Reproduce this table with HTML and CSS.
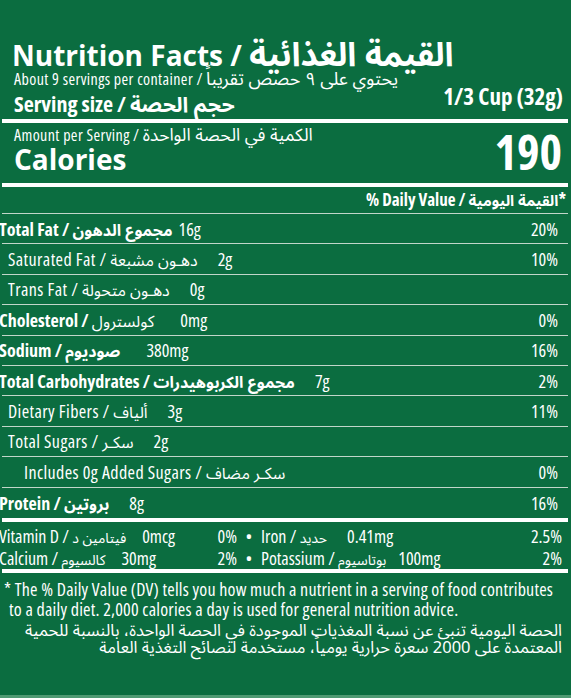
FILE: index.html
```html
<!DOCTYPE html>
<html lang="en">
<head>
  <meta charset="UTF-8">
  <title>Nutrition Facts</title>
  <link rel="stylesheet" href="styles.css">
</head>
<body>

  <div class="label">
    <h1 class="title">Nutrition Facts / <span class="ar">القيمة الغذائية</span></h1>
    <div class="servings">About 9 servings per container / <span class="ar">يحتوي على ٩ حصص تقريباً</span></div>
    <div class="serving-size">
      <span>Serving size / <span class="ar">حجم الحصة</span></span>
      <span class="cup">1/3 Cup (32g)</span>
    </div>

    <div class="rule-thick"></div>

    <div class="calories-block">
      <div>
        <div class="amount">Amount per Serving / <span class="ar">الكمية في الحصة الواحدة</span></div>
        <div class="calories">Calories</div>
      </div>
      <div class="cal-num">190</div>
    </div>

    <div class="rule-thick"></div>

    <div class="dv-head">% Daily Value / <span class="ar">القيمة اليومية</span>*</div>

    <div class="rows">
      <div class="row main close">
        <span class="name">Total Fat / <span class="ar">مجموع الدهون</span></span>
        <span class="amt">16g</span>
        <span class="pct">20%</span>
      </div>
      <div class="row sub">
        <span class="name">Saturated Fat / <span class="ar">دهـون مشبعة</span></span>
        <span class="amt">2g</span>
        <span class="pct">10%</span>
      </div>
      <div class="row sub">
        <span class="name">Trans Fat / <span class="ar">دهـون متحولة</span></span>
        <span class="amt">0g</span>
        <span class="pct"></span>
      </div>
      <div class="row main wide">
        <span class="name">Cholesterol / <span class="ar light">كولسترول</span></span>
        <span class="amt">0mg</span>
        <span class="pct">0%</span>
      </div>
      <div class="row main wide">
        <span class="name">Sodium / <span class="ar">صوديوم</span></span>
        <span class="amt">380mg</span>
        <span class="pct">16%</span>
      </div>
      <div class="row main">
        <span class="name">Total Carbohydrates / <span class="ar">مجموع الكربوهيدرات</span></span>
        <span class="amt">7g</span>
        <span class="pct">2%</span>
      </div>
      <div class="row sub">
        <span class="name">Dietary Fibers / <span class="ar">ألياف</span></span>
        <span class="amt">3g</span>
        <span class="pct">11%</span>
      </div>
      <div class="row sub">
        <span class="name">Total Sugars / <span class="ar">سكـر</span></span>
        <span class="amt">2g</span>
        <span class="pct"></span>
      </div>
      <div class="row sub2">
        <span class="name">Includes 0g Added Sugars / <span class="ar">سكـر مضاف</span></span>
        <span class="pct">0%</span>
      </div>
      <div class="row main last">
        <span class="name">Protein / <span class="ar">بروتين</span></span>
        <span class="amt">8g</span>
        <span class="pct">16%</span>
      </div>
    </div>

    <div class="rule-thick"></div>

    <div class="minerals">
      <div class="mineral-row">
        <div class="half">
          <span>Vitamin D / <span class="ar">فيتامين د</span></span>
          <span>0mcg</span>
          <span class="m-pct">0%</span>
        </div>
        <span class="dot">•</span>
        <div class="half right">
          <span>Iron / <span class="ar">حديد</span></span>
          <span>0.41mg</span>
          <span class="m-pct">2.5%</span>
        </div>
      </div>
      <div class="mineral-row">
        <div class="half">
          <span>Calcium / <span class="ar">كالسيوم</span></span>
          <span>30mg</span>
          <span class="m-pct">2%</span>
        </div>
        <span class="dot">•</span>
        <div class="half right near">
          <span>Potassium / <span class="ar">بوتاسيوم</span></span>
          <span>100mg</span>
          <span class="m-pct">2%</span>
        </div>
      </div>
    </div>

    <div class="rule-thick"></div>

    <div class="footnote">
      <p class="en">* The % Daily Value (DV) tells you how much a nutrient in a serving of food contributes</p>
      <p class="en indent">to a daily diet. 2,000 calories a day is used for general nutrition advice.</p>
      <p class="ar-note" dir="rtl">الحصة اليومية تنبئ عن نسبة المغذيات الموجودة في الحصة الواحدة، بالنسبة للحمية<br>المعتمدة على 2000 سعرة حرارية يومياً، مستخدمة لنصائح التغذية العامة</p>
    </div>
  </div>

</body>
</html>
```

FILE: styles.css
```css
* {
  box-sizing: border-box;
  margin: 0;
  padding: 0;
}

body {
  width: 571px;
  height: 698px;
  overflow: hidden;
  background: #0b6d40;
  color: #fff;
  font-family: "Open Sans", sans-serif;
  font-stretch: 75%;
  border-bottom: 3px solid #4f9a73;
}

/* arabic runs inside english lines: keep them from growing the line box */
.ar {
  font-family: "Noto Sans Arabic", "DejaVu Sans", sans-serif;
  font-stretch: normal;
  letter-spacing: 0;
  line-height: 0;
}

.label {
  padding: 40px 3px 0 2px;
}

/* header */
.title {
  font-size: 28px;
  font-stretch: normal;
  font-weight: bold;
  line-height: 30px;
  padding-left: 10px;
  white-space: nowrap;
}

.title .ar {
  font-size: 33px;
}

.servings {
  font-size: 16px;
  letter-spacing: 0.4px;
  line-height: 18px;
  padding-left: 12px;
  white-space: nowrap;
}

.servings .ar {
  font-size: 18px;
}

.serving-size {
  display: flex;
  justify-content: space-between;
  align-items: flex-start;
  margin: 4px 0 5px;
  padding: 0 5px 0 12px;
  font-size: 22px;
  font-weight: bold;
  line-height: 22px;
}

.serving-size .ar {
  font-size: 21px;
}

.cup {
  font-size: 23px;
  line-height: 8px;
}

.rule-thick {
  height: 4px;
  background: #fff;
}

/* calories */
.calories-block {
  display: flex;
  justify-content: space-between;
  align-items: flex-end;
  padding: 3px 6px 9px 12px;
}

.amount {
  font-size: 16px;
  letter-spacing: 0.4px;
  line-height: 18px;
  white-space: nowrap;
}

.amount .ar {
  font-size: 17.5px;
}

.calories {
  font-size: 28px;
  font-stretch: normal;
  font-weight: bold;
  line-height: 30px;
}

.cal-num {
  font-size: 48px;
  font-weight: bold;
  line-height: 44px;
}

/* nutrients */
.dv-head {
  text-align: right;
  font-size: 17px;
  font-weight: bold;
  line-height: 26px;
  padding-right: 2px;
  border-bottom: 1px solid #c2d6ca;
}

.dv-head .ar {
  font-size: 15px;
}

.row {
  display: flex;
  align-items: center;
  gap: 20px;
  height: 30.4px;
  font-size: 18px;
  line-height: 22px;
  border-bottom: 1px solid #c2d6ca;
  white-space: nowrap;
}

.row.close {
  gap: 6px;
}

.row.wide {
  gap: 26px;
}

.row.last {
  border-bottom: none;
}

.row .ar {
  font-size: 16px;
}

.row.sub .name,
.row.sub2 .name {
  letter-spacing: 0.4px;
}

.row.main .name {
  font-weight: bold;
  margin-left: -3px;
}

.row.main .ar.light {
  font-weight: normal;
}

.row.sub {
  padding-left: 6px;
}

.row.sub2 {
  padding-left: 22px;
}

.pct {
  margin-left: auto;
  padding-right: 10px;
}

/* vitamins and minerals */
.minerals {
  padding-top: 3px;
}

.mineral-row {
  display: grid;
  grid-template-columns: 238px 24px 1fr;
  font-size: 18px;
  line-height: 22px;
  margin-left: -3px;
  white-space: nowrap;
}

.mineral-row .ar {
  font-size: 14px;
}

.half {
  display: flex;
  gap: 16px;
}

.half.right {
  gap: 20px;
  padding-right: 6px;
}

.half.near {
  gap: 12px;
}

.m-pct {
  margin-left: auto;
}

.dot {
  text-align: center;
}

/* footnote */
.footnote {
  padding: 6px 0 0 2px;
}

.footnote .en {
  font-size: 18px;
  letter-spacing: 0.2px;
  line-height: 20px;
  white-space: nowrap;
}

.footnote .en.indent {
  padding-left: 5px;
}

.ar-note {
  font-family: "Noto Sans Arabic", "DejaVu Sans", sans-serif;
  font-stretch: normal;
  font-size: 16.5px;
  line-height: 17px;
  padding: 3px 6px 0 0;
  white-space: nowrap;
}
```
